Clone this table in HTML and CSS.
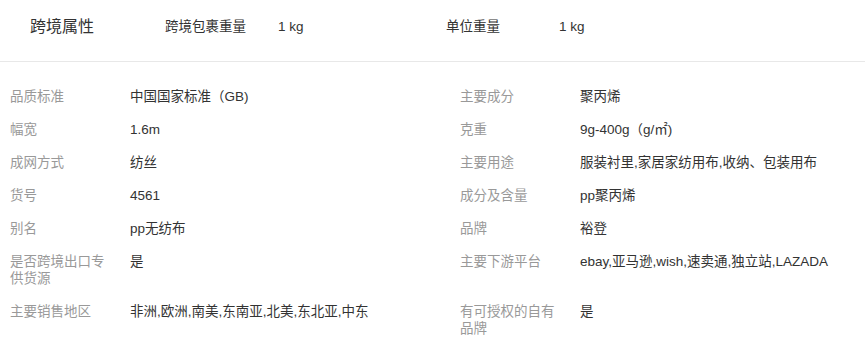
FILE: index.html
```html
<!DOCTYPE html>
<html lang="zh-CN">
<head>
<meta charset="utf-8">
<title>商品属性</title>
<link rel="stylesheet" href="styles.css">
</head>
<body>
<section class="cross">
  <h3 class="cross-title">跨境属性</h3>
  <div class="cross-item"><span class="cross-label">跨境包裹重量</span><span class="cross-value">1 kg</span></div>
  <div class="cross-item"><span class="cross-label">单位重量</span><span class="cross-value">1 kg</span></div>
</section>
<section class="attrs">
  <div class="attr"><span class="attr-label">品质标准</span><span class="attr-value">中国国家标准（GB)</span></div>
  <div class="attr"><span class="attr-label">主要成分</span><span class="attr-value">聚丙烯</span></div>
  <div class="attr"><span class="attr-label">幅宽</span><span class="attr-value">1.6m</span></div>
  <div class="attr"><span class="attr-label">克重</span><span class="attr-value">9g-400g（g/㎡)</span></div>
  <div class="attr"><span class="attr-label">成网方式</span><span class="attr-value">纺丝</span></div>
  <div class="attr"><span class="attr-label">主要用途</span><span class="attr-value">服装衬里,家居家纺用布,收纳、包装用布</span></div>
  <div class="attr"><span class="attr-label">货号</span><span class="attr-value">4561</span></div>
  <div class="attr"><span class="attr-label">成分及含量</span><span class="attr-value">pp聚丙烯</span></div>
  <div class="attr"><span class="attr-label">别名</span><span class="attr-value">pp无纺布</span></div>
  <div class="attr"><span class="attr-label">品牌</span><span class="attr-value">裕登</span></div>
  <div class="attr"><span class="attr-label">是否跨境出口专供货源</span><span class="attr-value">是</span></div>
  <div class="attr"><span class="attr-label">主要下游平台</span><span class="attr-value">ebay,亚马逊,wish,速卖通,独立站,LAZADA</span></div>
  <div class="attr"><span class="attr-label">主要销售地区</span><span class="attr-value">非洲,欧洲,南美,东南亚,北美,东北亚,中东</span></div>
  <div class="attr"><span class="attr-label">有可授权的自有品牌</span><span class="attr-value">是</span></div>
</section>
</body>
</html>
```
FILE: styles.css
```css
html, body {
  margin: 0;
  padding: 0;
  background: #fff;
}
body {
  font-family: "Liberation Sans", "Noto Sans CJK SC", sans-serif;
  color: #333;
  font-size: 13.5px;
}
.cross {
  display: flex;
  align-items: center;
  height: 54px;
  padding-bottom: 7px;
  border-bottom: 1px solid #e8e8e8;
}
.cross-title {
  margin: 0;
  width: 165px;
  flex: none;
  box-sizing: border-box;
  padding-left: 30px;
  font-size: 16px;
  line-height: 20px;
  font-weight: normal;
  color: #333;
}
.cross-item {
  display: flex;
  align-items: baseline;
  width: 281px;
  line-height: 20px;
  color: #333;
}
.cross-label {
  width: 113px;
  flex: none;
}
.attrs {
  display: grid;
  grid-template-columns: 450px 1fr;
  padding-top: 18px;
}
.attr {
  display: flex;
  align-items: flex-start;
  padding: 8px 0 8px 10px;
  line-height: 17px;
}
.attr-label {
  width: 105px;
  flex: none;
  margin-right: 15px;
  color: #999;
}
.attr-value {
  color: #333;
}
```
